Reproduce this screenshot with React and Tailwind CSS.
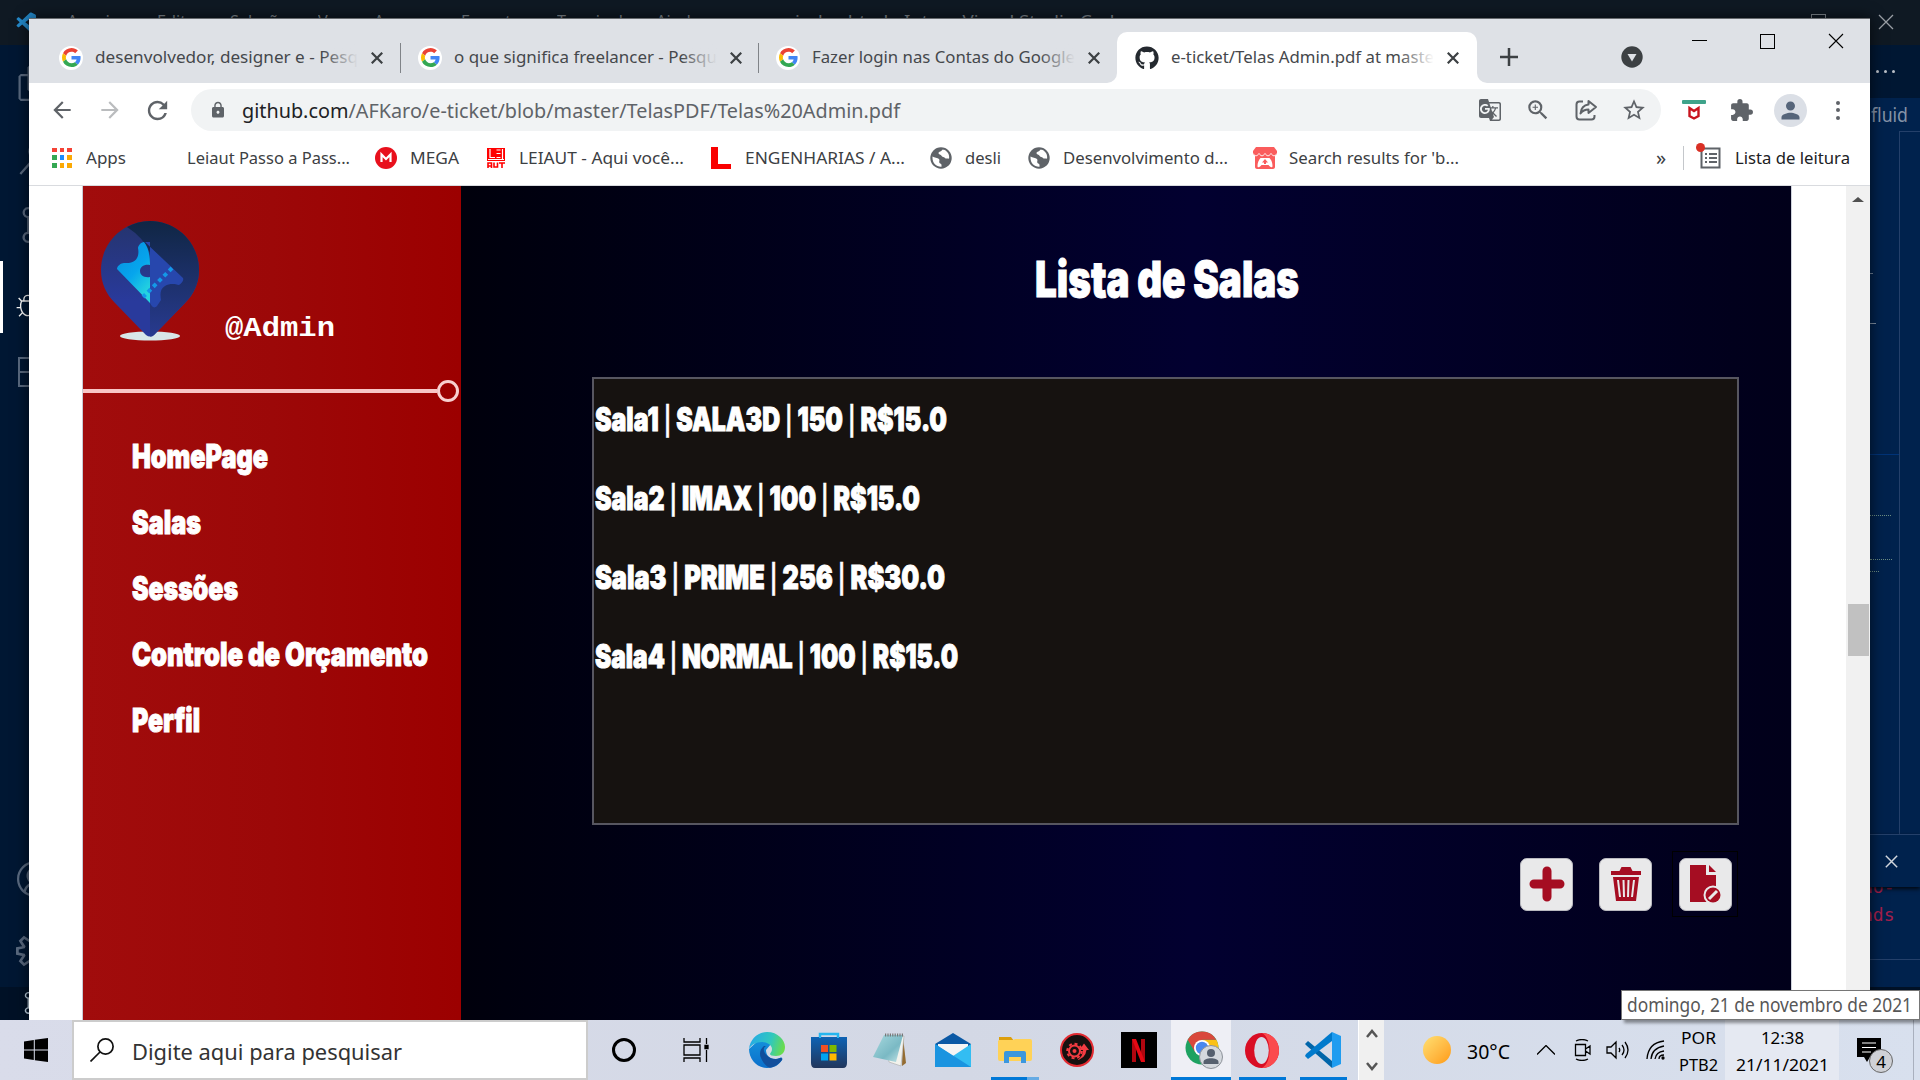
import { useLayoutEffect, useRef } from "react";
import { FaGithub } from "react-icons/fa";
import { MdLock, MdStarBorder, MdExtension, MdGTranslate, MdZoomIn, MdArrowBack, MdArrowForward, MdRefresh, MdPerson } from "react-icons/md";
import { VscVscode, VscFiles, VscSearch, VscSourceControl, VscBug, VscAccount, VscSettingsGear } from "react-icons/vsc";

const UI = "font-['Noto_Sans','Open_Sans',sans-serif]";

// Squeezes or widens one line of text to an exact pixel width.
function Fit({ w, children, className = "" }) {
  const ref = useRef(null);
  useLayoutEffect(() => {
    const el = ref.current;
    el.style.transform = "none";
    el.style.transform = `scaleX(${w / el.getBoundingClientRect().width})`;
  }, [w]);
  return (
    <span className="block shrink-0" style={{ width: w }}>
      <span ref={ref} className={`inline-block origin-left whitespace-nowrap align-top ${className}`}>{children}</span>
    </span>
  );
}

const GoogleIcon = () => (
  <span className="flex h-6 w-6 shrink-0 items-center justify-center rounded-full bg-white">
    <svg viewBox="0 0 48 48" className="h-[19px] w-[19px]">
      <path fill="#EA4335" d="M24 9.5c3.54 0 6.71 1.22 9.21 3.6l6.85-6.85C35.9 2.38 30.47 0 24 0 14.62 0 6.51 5.38 2.56 13.22l7.98 6.19C12.43 13.72 17.74 9.5 24 9.5z" />
      <path fill="#4285F4" d="M46.98 24.55c0-1.57-.15-3.09-.38-4.55H24v9.02h12.94c-.58 2.96-2.26 5.48-4.78 7.18l7.73 6c4.51-4.18 7.09-10.36 7.09-17.65z" />
      <path fill="#FBBC05" d="M10.53 28.59c-.48-1.45-.76-2.99-.76-4.59s.27-3.14.76-4.59l-7.98-6.19C.92 16.46 0 20.12 0 24s.92 7.54 2.56 10.78l7.97-6.19z" />
      <path fill="#34A853" d="M24 48c6.48 0 11.93-2.13 15.89-5.81l-7.73-6c-2.15 1.45-4.92 2.3-8.16 2.3-6.26 0-11.57-4.22-13.47-9.91l-7.98 6.19C6.51 42.62 14.62 48 24 48z" />
    </svg>
  </span>
);

const Cross = ({ className, sw = 2 }) => (
  <svg viewBox="0 0 16 16" className={className} stroke="currentColor" strokeWidth={sw} fill="none"><path d="M1 1 15 15M15 1 1 15" /></svg>
);

function Tab({ icon, title, w, className, fade }) {
  return (
    <div className={`flex h-[51px] shrink-0 items-center ${className}`}>
      {icon}
      <div className="relative -mt-[2px] ml-3 text-[17px] leading-[26px] text-[#45484c]">
        <Fit w={w}>{title}</Fit>
        <span className={`absolute right-0 top-0 h-full w-9 bg-gradient-to-r from-transparent ${fade}`} />
      </div>
      <Cross className="ml-[13px] h-3 w-3 shrink-0 text-[#3c4043]" sw={3} />
    </div>
  );
}

const Sep = ({ className = "" }) => <div className={`h-[30px] w-px shrink-0 bg-[#808388] ${className}`} />;

const Share = () => (
  <svg viewBox="0 0 24 24" className="h-6 w-6" fill="none" stroke="#5f6368" strokeWidth="2" strokeLinejoin="round">
    <path d="M9 3.5H5.5a3 3 0 0 0-3 3v12a3 3 0 0 0 3 3h12a3 3 0 0 0 3-3V17" />
    <path d="M14.5 3 22 9l-7.500 6v-3.500c-3.500 0-6 1.200-8 4 .5-5 3.500-8.500 8-9z" />
  </svg>
);

const bookmarks = [
  { gap: 14, iw: 20, text: "Apps", w: 40, tg: 14, icon: <AppsIcon /> },
  { gap: 61, iw: 0, text: "Leiaut Passo a Pass...", w: 163, tg: 0, icon: null },
  { gap: 25, iw: 22, text: "MEGA", w: 49, tg: 13, icon: <MegaIcon /> },
  { gap: 28, iw: 18, text: "LEIAUT - Aqui você...", w: 165, tg: 14, icon: <LeiautIcon /> },
  { gap: 27, iw: 20, text: "ENGENHARIAS / A...", w: 160, tg: 14, icon: <EngIcon /> },
  { gap: 24, iw: 24, text: "desli", w: 36, tg: 12, icon: <GlobeIcon /> },
  { gap: 26, iw: 24, text: "Desenvolvimento d...", w: 165, tg: 12, icon: <GlobeIcon /> },
  { gap: 25, iw: 24, text: "Search results for 'b...", w: 170, tg: 12, icon: <ItchIcon /> },
];

function GlobeIcon() {
  return (
    <svg viewBox="0 0 22 22" className="h-[22px] w-[22px]">
      <circle cx="11" cy="11" r="10.700" fill="#5f6368" />
      <path d="M2.500 9.500c2 1.500 5 1 6.500 2.500 1.200 1.500-.5 2.500.5 4 .8 1 2 .5 2 2v1.700C6.500 20 2.500 16 2.500 11zM12 2.700c0 2-3.500 1.500-3.500 3.500 0 1.500 2.500 1 3 2.500s2.500 1 3.500 2.300c1 1.500 3.500-.5 4 1 .9-4-1.500-8-5-9.200z" fill="#fff" />
    </svg>
  );
}
function AppsIcon() {
  return (
    <div className="grid h-5 w-5 grid-cols-3 gap-[3px]">
      <i className="bg-[#f44336]" /><i className="bg-[#f44336]" /><i className="bg-[#f44336]" />
      <i className="bg-[#34a853]" /><i className="bg-[#1a8cff]" /><i className="bg-[#fba904]" />
      <i className="bg-[#34a853]" /><i className="bg-[#fba904]" /><i className="bg-[#fba904]" />
    </div>
  );
}
function MegaIcon() {
  return (
    <svg viewBox="0 0 22 22" className="h-[22px] w-[22px]"><circle cx="11" cy="11" r="11" fill="#e8101c" /><path d="M6.500 15V7.500L11 12l4.500-4.500V15" stroke="#fff" strokeWidth="2.200" fill="none" /></svg>
  );
}
function LeiautIcon() {
  return (
    <svg viewBox="0 0 18 20" className="h-5 w-[18px]"><path d="M0 0h18v13H0z" fill="#f00" /><path d="M3 1v8.500h5M9.500 2h4M9.500 5.500h4M9.500 9.500h4M15.500 1v10M1 11.500h16" stroke="#fff" strokeWidth="1.200" fill="none" /><path d="M1 20v-5h3.500v5M1 18h3.500M7 14.500V19h3.500v-4.500M12 15h6M15 15v5" stroke="#f00" strokeWidth="1.600" fill="none" /></svg>
  );
}
function EngIcon() {
  return <div className="h-[22px] w-5 border-b-[5px] border-l-[7px] border-[#f90000]" />;
}
function ItchIcon() {
  return (
    <svg viewBox="0 0 24 22" className="h-[22px] w-6" fill="#fa5c5c"><path d="M3 0h18l3 4v2c0 1.500-1 2.500-2 2.500V20c0 1-1 2-2 2H4c-1 0-2-1-2-2V8.500C1 8.500 0 7.500 0 6V4z" /><path d="M0 6.500c2 3 4 3 6 0 2 3 4 3 6 0 2 3 4 3 6 0 2 3 4 3 6 0" stroke="#fff" fill="none" /><path d="M7.500 11h9c2 2 3 5 3 8 0 2-2 1.500-4-1h-7c-2 2.500-4 3-4 1 0-3 1-6 3-8z" fill="#fff" /><path d="m12 12 3 3.500h-2v1.500h-2v-1.500H9z" /></svg>
  );
}

function Chrome() {
  return (
    <>
      <div className="flex h-[65px] items-start border-t border-[#66696d] bg-[#dee1e6]">
        <div className="flex h-[64px] items-start pt-[13px]">
          <Tab icon={<GoogleIcon />} title="desenvolvedor, designer e - Pesq" w={263} className="ml-[30px]" fade="to-[#dee1e6]" />
          <Sep className="ml-[17px] mt-[11px]" />
          <Tab icon={<GoogleIcon />} title="o que significa freelancer - Pesqu" w={263} className="ml-[17px]" fade="to-[#dee1e6]" />
          <Sep className="ml-4 mt-[11px]" />
          <Tab icon={<GoogleIcon />} title="Fazer login nas Contas do Google" w={263} className="ml-[17px]" fade="to-[#dee1e6]" />
        </div>
        <div className="ml-[7px] flex h-[64px] items-end">
          <div className="h-[10px] w-[10px] bg-white"><div className="h-full w-full rounded-br-[10px] bg-[#dee1e6]" /></div>
          <Tab
            icon={<FaGithub className="h-[24px] w-[24px] shrink-0 text-[#24292f]" />}
            title="e-ticket/Telas Admin.pdf at maste" w={263}
            className="w-[360px] rounded-t-[10px] bg-white pl-[18px]" fade="to-white"
          />
          <div className="h-[10px] w-[10px] bg-white"><div className="h-full w-full rounded-bl-[10px] bg-[#dee1e6]" /></div>
        </div>
        <svg viewBox="0 0 20 20" className="ml-3 mt-[28px] h-5 w-5" stroke="#3c4043" strokeWidth="2.500"><path d="M10 1v18M1 10h18" /></svg>
        <svg viewBox="0 0 22 22" className="ml-[102px] mt-[27px] h-[22px] w-[22px]"><circle cx="11" cy="11" r="10.700" fill="#3c4043" /><path d="M6.500 8h9L11 15.500z" fill="#dee1e6" /></svg>
        <div className="ml-[49px] mt-[21px] h-px w-[15px] bg-black" />
        <div className="ml-[53px] mt-[15px] h-[15px] w-[15px] border border-black" />
        <Cross className="ml-[53px] mt-[14px] h-4 w-4 text-black" sw={1.1} />
      </div>

      <div className="flex h-[54px] items-center bg-white pl-[20px] text-[#5f6368]">
        <MdArrowBack className="h-[26px] w-[26px]" />
        <MdArrowForward className="ml-[22px] h-[26px] w-[26px] text-[#babcbe]" />
        <MdRefresh className="ml-[20px] h-[29px] w-[29px]" />
        <div className="ml-[19px] flex h-[42px] w-[1470px] items-center rounded-full bg-[#f1f3f4] pl-[18px]">
          <MdLock className="h-[18px] w-[18px]" />
          <div className="ml-[15px] mt-[2px] text-[20px] leading-7">
            <Fit w={658}><span className="text-[#202124]">github.com</span>/AFKaro/e-ticket/blob/master/TelasPDF/Telas%20Admin.pdf</Fit>
          </div>
          <div className="ml-[578px] flex items-center gap-[23px]">
            <MdGTranslate className="h-6 w-6" />
            <MdZoomIn className="h-[26px] w-[26px]" />
            <Share />
            <MdStarBorder className="h-[26px] w-[26px]" />
          </div>
        </div>
        <svg viewBox="0 0 24 20" className="ml-[21px] h-5 w-6"><rect width="24" height="4" rx="1" fill="#3fa38a" /><path d="M7.500 8v8l4.500 2.500 4.500-2.500V8L12 11z" fill="none" stroke="#c8141e" strokeWidth="2.400" /></svg>
        <MdExtension className="ml-[23px] h-[25px] w-[25px]" />
        <span className="ml-5 flex h-[33px] w-[33px] items-center justify-center rounded-full bg-[#dbdfe6]"><MdPerson className="h-[27px] w-[27px] text-[#56657a]" /></span>
        <span className="ml-[29px] flex flex-col gap-[3.500px]"><i className="h-1 w-1 rounded-full bg-[#5f6368]" /><i className="h-1 w-1 rounded-full bg-[#5f6368]" /><i className="h-1 w-1 rounded-full bg-[#5f6368]" /></span>
      </div>

      <div className="flex h-[49px] items-center border-b border-[#d9dbdf] bg-white pb-[7px] text-[17px] text-[#3c4043]">
        <div className="w-[9px]" />
        {bookmarks.map((b) => (
          <div key={b.text} className="flex shrink-0 items-center" style={{ marginLeft: b.gap }}>
            <span className="flex justify-center" style={{ width: b.iw, marginRight: b.tg }}>{b.icon}</span>
            <Fit w={b.w}>{b.text}</Fit>
          </div>
        ))}
        <span className="ml-[196px] w-[12px] text-center text-[20px] leading-5">»</span>
        <div className="ml-4 h-6 w-px bg-[#c4c7cb]" />
        <div className="relative ml-4 h-[22px] w-[21px]">
          <svg viewBox="0 0 21 22" className="h-full w-full" fill="none" stroke="#5f6368" strokeWidth="2"><path d="M1.500 1.500h18v19h-18zM5 7h2M9 7h8M5 11h2M9 11h8M5 15h2M9 15h8" /></svg>
          <span className="absolute -left-[4px] -top-[4px] h-[9px] w-[9px] rounded-full bg-[#d93025]" />
        </div>
        <div className="ml-[14px] text-[#202124]"><Fit w={115}>Lista de leitura</Fit></div>
      </div>
    </>
  );
}

const IMPACT = "font-['Inter',sans-serif] font-black text-white [-webkit-text-stroke:1px_white]";

const Logo = () => (
  <svg viewBox="0 0 100 122" className="h-[122px] w-[100px] shrink-0">
    <defs>
      <linearGradient id="pin" x1="0" y1="0" x2="0" y2="1"><stop offset="0" stopColor="#25346d" /><stop offset=".7" stopColor="#293a9c" /></linearGradient>
      <linearGradient id="dark" x1="0" y1="0" x2="0" y2="1"><stop offset="0" stopColor="#102644" /><stop offset="1" stopColor="#283a8f" /></linearGradient>
      <linearGradient id="tk" x1="0" y1="0" x2=".6" y2="1"><stop offset="0" stopColor="#088bdc" /><stop offset=".6" stopColor="#06a5ed" /><stop offset="1" stopColor="#25d4df" /></linearGradient>
    </defs>
    <ellipse cx="50" cy="116" rx="30" ry="4.600" fill="#d8e6e8" />
    <path d="M50 1C23 1 1 23 1 50c0 13 5 24 14 33l31 32q4 3 8 0l31-32c9-9 14-20 14-33C99 23 77 1 50 1z" fill="url(#pin)" />
    <path d="M27 7C34 3 42 1 50 1c27 0 49 22 49 49 0 13-5 24-14 33l-31 32q-2 2-4 1.500V33Q44 18 27 7z" fill="url(#dark)" />
    <path d="M45 22 83 58c1 2-1 5-4 7-4-1-9-2-14 1-5 3-5 8-4 14l-4 6c-3 3-5 1-7-3V22z" fill="#2747ad" />
    <path d="M44 22c-3 0-6 4-6 6 2 10-3 16-14 15-3 0-7 3-7 6l33 34V57c-6 1-10-2-10-6s4-7 10-6C50 34 48 27 44 22z" fill="url(#tk)" />
    <path d="m72 48-29 29" stroke="#1498e8" strokeWidth="4" strokeDasharray="4 3.500" />
  </svg>
);

const menu = [["HomePage", 136], ["Salas", 69], ["Sessões", 106], ["Controle de Orçamento", 296], ["Perfil", 68]];
const rooms = [["Sala1 | SALA3D | 150 | R$15.0", 352], ["Sala2 | IMAX | 100 | R$15.0", 325], ["Sala3 | PRIME | 256 | R$30.0", 350], ["Sala4 | NORMAL | 100 | R$15.0", 363]];

// One list line; its separators are set in a lighter weight than the values.
const Room = ({ text, w }) => (
  <Fit w={w}>
    {text.split("|").map((part, i) => (
      <span key={i}>
        {i > 0 && <span className="text-[28px] font-semibold leading-none [-webkit-text-stroke:0.500px_white]">|</span>}
        {part}
      </span>
    ))}
  </Fit>
);

const ActionButton = ({ children }) => (
  <div className="flex h-[53px] w-[53px] items-center justify-center rounded-[7px] border border-[#b9b9bf] bg-[#e9e9ea]">{children}</div>
);

function PdfPage() {
  return (
    <div className="flex h-[834px] bg-white pl-[53px]">
      <aside className="flex w-[379px] shrink-0 flex-col border-l border-[#c9ccd4] bg-gradient-to-r from-[#a10c0c] via-[#9c0808] to-[#9c0000]">
        <div className="flex h-[193px] pl-[17px] pt-[34px]">
          <Logo />
          <div className="ml-[25px] mt-[91px] font-['Liberation_Mono',monospace] text-[28px] font-bold leading-9 text-white"><Fit w={110}>@Admin</Fit></div>
        </div>
        <div className="flex h-6 items-center">
          <div className="h-[4px] w-[354px] bg-[#f8c6c6]" />
          <div className="h-[22px] w-[22px] rounded-full border-[3px] border-[#f8d0d0]" />
        </div>
        <nav className={`mt-[20px] pl-[49px] text-[33px] leading-[66px] ${IMPACT}`}>
          {menu.map(([t, w]) => <Fit key={t} w={w}>{t}</Fit>)}
        </nav>
      </aside>
      <main className="w-[1330px] shrink-0 bg-gradient-to-r from-[#00000c] via-[#020030] via-55% to-[#01001a] pl-[131px]">
        <h1 className={`ml-[443px] pt-[57px] text-[50px] leading-[72px] ${IMPACT}`}><Fit w={264}>Lista de Salas</Fit></h1>
        <div className={`mt-[62px] h-[448px] w-[1147px] border-2 border-[#575660] bg-[#161210] pl-px pt-px text-[33px] leading-[79px] ${IMPACT}`}>
          {rooms.map(([t, w]) => <Room key={t} text={t} w={w} />)}
        </div>
        <div className="mt-[26px] flex h-[66px] w-[1146px] items-center justify-end">
          <div className="flex items-center gap-[26px] pr-5">
            <ActionButton><svg viewBox="0 0 36 36" className="h-9 w-9" stroke="#a50d22" strokeWidth="9" strokeLinecap="round"><path d="M18 5v26M5 18h26" /></svg></ActionButton>
            <ActionButton>
              <svg viewBox="0 0 30 34" className="-mt-px h-[34px] w-[30px]" fill="#a50d22"><path d="M0 4h8.500l2-4h9l2 4H30v4H0zM2 10h26l-3 24H5z" /><path d="m7 13 2 17M12.500 13l.5 17M17.500 13l-.5 17M23 13l-2 17" stroke="#e9e9ea" strokeWidth="2" /></svg>
            </ActionButton>
          </div>
          <div className="flex h-[66px] w-[66px] items-center justify-center border border-black">
            <ActionButton>
              <svg viewBox="0 0 32 40" className="h-10 w-8"><path d="M1 1h16v10h10v27H1z" fill="#a50d22" /><path d="M20 1v7h7z" fill="#a50d22" /><circle cx="24" cy="31" r="9.500" fill="#e9e9ea" /><circle cx="24" cy="31" r="7.500" fill="#a50d22" /><path d="m20 35 8-8" stroke="#e9e9ea" strokeWidth="3" /></svg>
            </ActionButton>
          </div>
        </div>
      </main>
      <div className="w-[55px] border-l border-[#cfd3dc] bg-white" />
      <div className="flex w-6 flex-col items-center bg-[#f1f1f1] pt-[11px]">
        <svg viewBox="0 0 12 5" className="h-[5px] w-3" fill="#505050"><path d="M0 5 6 0l6 5z" /></svg>
        <div className="mt-[402px] h-[52px] w-[21px] bg-[#c1c1c1]" />
      </div>
    </div>
  );
}

const menuBar = [["Arquivo", 67, 62], ["Editar", 157, 45], ["Seleção", 230, 58], ["Ver", 318, 25], ["Acessar", 374, 58], ["Executar", 461, 66], ["Terminal", 557, 66], ["Ajuda", 656, 44], ["index.html - Inter - Visual Studio Code", 795, 330]];

function Editor() {
  return (
    <div className="absolute inset-0 h-[1020px] overflow-hidden bg-[#00224d]">
      <div className="relative h-[45px] bg-[#0f1923]">
        <VscVscode className="absolute left-[15px] top-[11px] h-6 w-6 text-[#2489ca]" />
        {menuBar.map(([t, x, w]) => (
          <div key={t} className="absolute top-[9px] text-[17px] leading-6 text-[#7f868d]" style={{ left: x }}><Fit w={w}>{t}</Fit></div>
        ))}
        <div className="absolute left-[1811px] top-[14px] h-3 w-[15px] border border-[#7f868d]" />
        <Cross className="absolute left-[1878px] top-[14px] h-4 w-4 text-[#9a9fa5]" sw={1.3} />
      </div>
      <div className="flex h-[942px] justify-between">
        <div className="relative w-[60px] bg-[#001733] text-[#5a6a80]">
          <VscFiles className="absolute left-[17px] top-[20px] h-9 w-9" />
          <VscSearch className="absolute left-[18px] top-[94px] h-9 w-9" />
          <VscSourceControl className="absolute left-[18px] top-[162px] h-9 w-9" />
          <div className="absolute left-0 top-[216px] h-[72px] w-[3px] bg-white" />
          <VscBug className="absolute left-[15px] top-[248px] h-[26px] w-[26px] text-white" />
          <svg viewBox="0 0 36 30" className="absolute left-[18px] top-[312px] h-[30px] w-9" fill="none" stroke="currentColor" strokeWidth="2"><path d="M1 1h30v28H1zM1 15h30" /></svg>
          <VscAccount className="absolute left-[17px] top-[816px] h-9 w-9" />
          <VscSettingsGear className="absolute left-[16px] top-[888px] h-9 w-9" />
        </div>
        <div className="w-[60px] bg-[#00224d]">
          <div className="flex h-[53px] items-center gap-[5px] bg-[#001733] pl-[16px]">
            <i className="h-[3px] w-[3px] rounded-full bg-[#b9bfc7]" /><i className="h-[3px] w-[3px] rounded-full bg-[#b9bfc7]" /><i className="h-[3px] w-[3px] rounded-full bg-[#b9bfc7]" />
          </div>
          <div className="h-[33px] pl-[11px] pt-[3px] text-[19px] leading-7 text-[#8593a8]"><Fit w={37}>fluid</Fit></div>
          <div className="relative h-[703px]">
            <div className="absolute left-[39px] top-0 h-full w-[21px] border-l border-t border-[#24406a]" />
            <div className="absolute left-0 top-[323px] h-px w-[39px] bg-[#003377]" />
            <div className="absolute left-[10px] top-[142px] h-px w-[3px] bg-[#70839b]" />
            <div className="absolute left-[10px] top-[192px] h-px w-[6px] bg-[#8190a4]" />
            <div className="absolute left-[10px] top-[384px] w-[21px] border-t border-dotted border-[#6c8d83]" />
            <div className="absolute left-[10px] top-[428px] w-[22px] border-t border-dotted border-[#6c8d83]" />
            <div className="absolute left-[10px] top-[440px] w-[9px] border-t border-dotted border-[#6c8d83]" />
          </div>
          <div className="relative z-10 flex h-[53px] items-center border-t border-[#24406a] bg-[#00224d] pl-[25px] shadow-[0_2px_4px_#000c]"><Cross className="h-[13px] w-[13px] text-[#d2d7de]" sw={1.8} /></div>
          <div className="flex h-[73px] flex-col border-b border-[#24406a] pl-[2px] font-['DejaVu_Sans_Mono',monospace] text-[18px] leading-[26px] text-[#a51f4b]">
            <div className="-mt-[13px]">no-</div><div className="mt-[2px]">nds</div>
          </div>
        </div>
      </div>
      <div className="h-[33px] bg-[#001126] pl-[22px] pt-[5px]"><VscSourceControl className="h-[22px] w-[22px] text-[#c4d7e6]" /></div>
    </div>
  );
}

const Slot = ({ w, children, className = "" }) => (
  <div className={`flex h-[60px] shrink-0 items-center justify-center ${className}`} style={{ width: w }}>{children}</div>
);

const EdgeIcon = () => (
  <svg viewBox="0 0 36 36" className="h-9 w-9">
    <defs>
      <linearGradient id="e1" x1="0" y1=".3" x2="1" y2=".5"><stop offset="0" stopColor="#25a9e8" /><stop offset=".6" stopColor="#31c8bd" /><stop offset="1" stopColor="#6bdc4b" /></linearGradient>
      <linearGradient id="e2" x1="0" y1="0" x2="0" y2="1"><stop offset="0" stopColor="#1593dc" /><stop offset="1" stopColor="#0b6fcb" /></linearGradient>
    </defs>
    <path d="M0 17c0 10 8 19 18 19 7 0 12-3 15-8 1-2-1-3-2-2-6 3-14 0-14-8l5-6-10-6z" fill="url(#e2)" />
    <path d="M0 17C1 7 9 0 18 0c11 0 18 8 18 15 0 6-4 9-9 9-4 0-6-1-6-2s2-2 2-5c0-4-5-7-10-7-6 0-11 3-13 7z" fill="url(#e1)" />
    <path d="M15 14c-4 3-5 8-3 12 2 5 6 9 9 9.700 5-.7 9-3.700 12-7.700 1-2-1-2-2-2-6 3-14-1-16-7-.5-2 0-4 2-5z" fill="#124f9c" />
  </svg>
);

const ChromeIcon = () => (
  <svg viewBox="0 0 40 40" className="ml-2 h-10 w-10">
    <circle cx="17" cy="18" r="16.500" fill="#1da261" />
    <path d="M17 9.800h14.300A16.500 16.500 0 0 1 17 34.500l7-12z" fill="#fbc116" />
    <path d="M2.700 9.800 10 22l7-12.200h14.300A16.500 16.500 0 0 0 2.700 9.800z" fill="#d9483b" />
    <circle cx="17" cy="18" r="8" fill="#fff" /><circle cx="17" cy="18" r="6.200" fill="#4a88ee" />
    <circle cx="26" cy="27" r="11.500" fill="#d5d9de" stroke="#8d9299" /><circle cx="26" cy="23" r="4" fill="#56606e" /><path d="M18.500 34v-2c0-5 15-5 15 0v2z" fill="#56606e" />
  </svg>
);

function Taskbar() {
  return (
    <div className={`relative z-20 flex h-[60px] items-center bg-gradient-to-r from-[#d9dcea] via-[#d3d8e5] to-[#d8e0ee] text-black ${UI}`}>
      <Slot w={72}><svg viewBox="0 0 24 24" className="-mt-px h-6 w-6"><path d="M0 3.400 9.800 2v9.400H0zM10.800 1.800 24 0v11.400H10.800zM0 12.500h9.800V22L0 20.600zM10.800 12.500H24V24l-13.200-1.800z" /></svg></Slot>
      <div className="flex h-[60px] w-[516px] shrink-0 items-center border-2 border-[#ccc] bg-white pl-[16px]">
        <svg viewBox="0 0 24 24" className="h-6 w-6" fill="none" stroke="#111" strokeWidth="1.700"><circle cx="15.500" cy="8.500" r="7.600" /><path d="M10 14 .5 23.500" /></svg>
        <div className="ml-[18px] mt-px text-[22px] leading-7 text-[#333]"><Fit w={270}>Digite aqui para pesquisar</Fit></div>
      </div>
      <Slot w={72}><div className="h-6 w-6 rounded-full border-[3.500px] border-black" /></Slot>
      <Slot w={71}><svg viewBox="0 0 26 24" className="h-6 w-[26px]" fill="none" stroke="#000" strokeWidth="1.300"><path d="M1 0v4h16V0M1 7h16v10H1zM1 24v-4h16v4M23.500 0v6M23.500 12v12" /><path d="M22 7.500h3v3h-3z" fill="#000" /></svg></Slot>
      <Slot w={72}><EdgeIcon /></Slot>
      <Slot w={52}>
        <svg viewBox="0 0 36 36" className="h-9 w-9"><defs><linearGradient id="st" x1="0" y1="0" x2="0" y2="1"><stop stopColor="#0e63b4" /><stop offset="1" stopColor="#21365c" /></linearGradient></defs><path d="M9 7V2h18v5" fill="none" stroke="#25b6ef" strokeWidth="2.500" /><path d="M0 5h36v26q0 5-4 5H4q-4 0-4-5z" fill="url(#st)" /><path d="M9 6V2M27 6V2" stroke="#25b6ef" strokeWidth="2" /><path d="M10 13h7v7h-7z" fill="#f25022" /><path d="M18.500 13h7v7h-7z" fill="#7fba00" /><path d="M10 21.500h7v7h-7z" fill="#00a4ef" /><path d="M18.500 21.500h7v7h-7z" fill="#ffb900" /></svg>
      </Slot>
      <Slot w={70}>
        <svg viewBox="0 0 36 34" className="h-[34px] w-9"><defs><linearGradient id="np" x1="0" y1="0" x2="1" y2="1"><stop stopColor="#a8d9df" /><stop offset=".6" stopColor="#7ab9c4" /><stop offset="1" stopColor="#c9e7e9" /></linearGradient></defs><path d="m31 4 3 26-4 3z" fill="#946c31" /><path d="M13 3h19l-3 30-12-4z" fill="#f2f2ec" stroke="#aaa" strokeWidth=".6" /><path d="M12 2h19l-7 27L1 24z" fill="url(#np)" /><path d="M13 2h18" stroke="#777" strokeWidth="3" strokeDasharray="1.200 1.200" /></svg>
      </Slot>
      <Slot w={55}>
        <svg viewBox="0 0 36 34" className="h-[34px] w-9"><path d="M0 11 18 0l18 11v4H0z" fill="#0b59a5" /><path d="M3 11h30v12H3z" fill="#f5f5f5" /><path d="M0 11 18 23 36 11v23H0z" fill="#33bdf2" /><path d="m0 11 36 23H0z" fill="#1a94e0" /></svg>
      </Slot>
      <Slot w={50} className="relative">
        <div className="absolute bottom-0 left-[11px] flex h-[3px] w-12"><i className="w-9 bg-[#0078d7]" /><i className="w-3 bg-[#66abe4]" /></div>
        <svg viewBox="0 0 34 28" className="ml-[20px] h-7 w-[34px] shrink-0"><path d="M1 1h12l3 4H1z" fill="#dd9f0c" /><path d="M1 4h14l2-1h15q2 0 2 2v18q0 2-2 2H2q-2 0-2-2V5z" fill="#ffd257" /><path d="M6 27V17q0-2 2-2h18q2 0 2 2v10h-5v-6H11v6z" fill="#3b97de" /></svg>
      </Slot>
      <Slot w={70}><svg viewBox="0 0 34 34" className="ml-6 h-[34px] w-[34px]"><circle cx="17" cy="17" r="16" fill="#17110f" stroke="#e22b31" strokeWidth="2" /><circle cx="14.500" cy="18" r="5.500" fill="none" stroke="#f33c42" strokeWidth="2" /><circle cx="14.500" cy="18" r="7.300" fill="none" stroke="#f33c42" strokeWidth="2" strokeDasharray="3 2.700" /><path d="M17 27q6-3 6-10h-3.500L24 10.500l5 6.500H26.500q-1 8-9.500 10z" fill="#f33c42" /><circle cx="14.500" cy="18" r="2" fill="#f33c42" /></svg></Slot>
      <Slot w={71}><div className="ml-[6px] flex h-9 w-9 items-center justify-center bg-black"><svg viewBox="0 0 13 23" className="h-[23px] w-[13px]"><path d="M0 0h4v23H0zM9 0h4v23H9z" fill="#b1060f" /><path d="M0 0h4l9 23H9z" fill="#e50914" /></svg></div></Slot>
      <div className="flex h-[60px] shrink-0">
        <Slot w={60} className="border-b-[3px] border-[#0078d7] bg-[#eeeff5] pt-[3px]"><ChromeIcon /></Slot>
        <Slot w={47} className="ml-2 border-b-[3px] border-[#0078d7] pt-[3px]">
          <svg viewBox="0 0 34 35" className="-ml-[2px] h-[35px] w-[34px]"><ellipse cx="17" cy="17.500" rx="17" ry="17.500" fill="#d90d24" /><path d="M17 0c9 0 17 7 17 17.500S26 35 17 35c10-5 10-30 0-35z" fill="#fb4a4d" /><ellipse cx="16.500" cy="17.500" rx="7.300" ry="13.500" fill="#d5d9e6" /></svg>
        </Slot>
        <Slot w={47} className="ml-[14px] border-b-[3px] border-[#0078d7] pt-[3px]">
          <svg viewBox="0 0 36 36" className="-ml-[2px] h-9 w-9"><path d="m0 12 3-3 24 20v7L2 14z" fill="#0065a9" /><path d="m0 24 3 3L27 9V0L1 22z" fill="#007acc" /><path d="M27 0 36 4v28l-9 4z" fill="#1f9cf0" /></svg>
        </Slot>
      </div>
      <div className="ml-[11px] flex h-[60px] w-[26px] shrink-0 flex-col items-center justify-between border-l border-white bg-[#f0f0f0] py-[9px]">
        <svg viewBox="0 0 12 9" className="h-[9px] w-3" fill="none" stroke="#555" strokeWidth="2.500"><path d="m1 8 5-6 5 6" /></svg>
        <svg viewBox="0 0 12 9" className="h-[9px] w-3" fill="none" stroke="#555" strokeWidth="2.500"><path d="m1 1 5 6 5-6" /></svg>
      </div>
      <div className="ml-[39px] h-7 w-7 shrink-0 rounded-full bg-gradient-to-br from-[#ffe070] to-[#ff9a00]" />
      <div className="ml-4 mt-[4px] text-[20px]"><Fit w={43}>30°C</Fit></div>
      <svg viewBox="0 0 18 10" className="ml-[27px] h-[10px] w-[18px] shrink-0" fill="none" stroke="#000" strokeWidth="1.300"><path d="m0 9.500 9-9 9 9" /></svg>
      <svg viewBox="0 0 18 22" className="ml-[19px] h-[22px] w-[18px] shrink-0" fill="none" stroke="#000" strokeWidth="1.300"><path d="M1.500 5.500h10v11h-10zM11.500 10l4.500-3v8l-4.500-3M2 2q6-3 12 0M2 20q6 3 12 0" /></svg>
      <svg viewBox="0 0 24 20" className="ml-[14px] h-5 w-6 shrink-0" fill="none" stroke="#000" strokeWidth="1.300"><path d="M1 7h4l5-5v16l-5-5H1zM13 8q1.500 2 0 4M16 5q4 5 0 10M19 2q6 8 0 16" /></svg>
      <svg viewBox="0 0 20 20" className="ml-[16px] h-5 w-5 shrink-0" fill="none" stroke="#000" strokeWidth="1.300"><path d="M1 19Q2 3 18 1M5 19Q6 8 18 6M9 19q1-7 9-8M13 19q0-4 5-4" /><circle cx="17" cy="18" r="1" fill="#000" /></svg>
      <div className="ml-3 flex w-10 shrink-0 flex-col items-center pt-px text-[17px] leading-[27px]"><Fit w={35}>POR</Fit><Fit w={39}>PTB2</Fit></div>
      <div className="ml-[7px] flex h-[60px] w-[114px] shrink-0 flex-col items-center justify-center bg-[#e5e9f2] pt-px text-[17px] leading-[27px]"><Fit w={43}>12:38</Fit><Fit w={93}>21/11/2021</Fit></div>
      <div className="relative ml-[18px] h-6 w-6 shrink-0">
        <svg viewBox="0 0 24 24" className="h-6 w-6"><path d="M0 0h24v19H13l-3 5-3-5H0z" /><path d="M5 5h14M5 9.500h14M5 14h9" stroke="#fff" strokeWidth="1.200" /></svg>
        <span className="absolute left-3 top-[11px] flex h-6 w-6 items-center justify-center rounded-full border border-[#666] bg-[#cfd1d6] text-[17px] leading-none">4</span>
      </div>
      <div className="ml-[32px] h-[60px] w-px bg-[#a9b0be]" />
    </div>
  );
}

export default function App() {
  return (
    <div className={`relative h-[1080px] w-[1920px] overflow-hidden bg-[#00224d] ${UI}`}>
      <Editor />
      <div className="relative z-10 h-[1020px] pl-[29px] pt-[18px]">
        <div className="h-[1002px] w-[1841px] overflow-hidden bg-white shadow-[0_0_14px_#000a]">
          <Chrome />
          <PdfPage />
        </div>
      </div>
      <Taskbar />
      <div className="absolute left-[1621px] top-[990px] z-30 flex h-[30px] w-[299px] items-center border border-[#767676] bg-white pl-[5px] text-[19px] leading-6 text-[#575757] shadow-[3px_3px_3px_#0006]">
        <Fit w={285}>domingo, 21 de novembro de 2021</Fit>
      </div>
    </div>
  );
}
